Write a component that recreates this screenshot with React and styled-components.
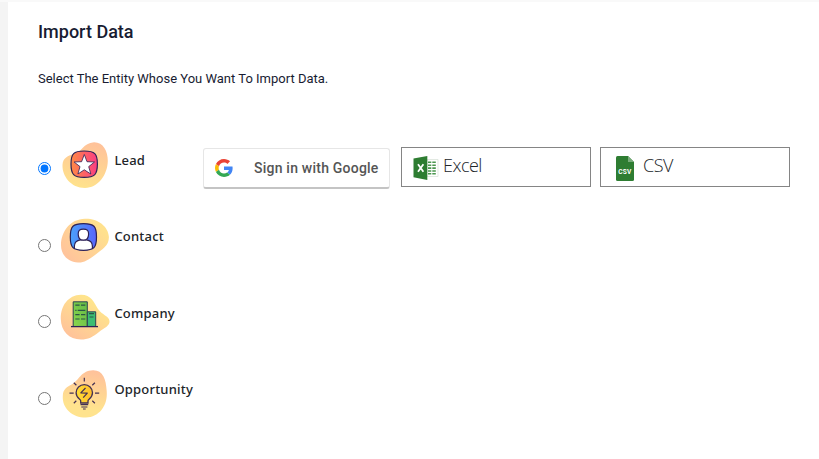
import React, { useState } from 'react';
import styled, { createGlobalStyle } from 'styled-components';

const GlobalStyle = createGlobalStyle`
  * {
    box-sizing: border-box;
  }

  body {
    margin: 0;
    background-color: #f4f4f4;
    overflow: hidden;
  }
`;

const Page = styled.div`
  height: 100vh;
  padding: 2px 0 0 8px;
  background: linear-gradient(#f9f9f9 2px, #f4f4f4 2px);
`;

const Panel = styled.main`
  height: 100%;
  padding: 18px 29px 0 30px;
  background-color: #fff;
  color: #181c32;
  font-family: Roboto, sans-serif;
`;

const Title = styled.h1`
  margin: 0;
  font-size: 18px;
  line-height: 24px;
  font-weight: 500;
`;

const Description = styled.p`
  margin: 25px 0 0;
  font-size: 13px;
  line-height: 20px;
`;

const EntityList = styled.div`
  margin-top: 41px;
`;

const EntityRow = styled.div`
  height: 76.5px;
  display: grid;
  grid-template-columns: 22px 54px 89px 1fr;
  align-items: start;
`;

const Radio = styled.input`
  width: 13px;
  height: 13px;
  margin: 32px 0 0;
`;

const EntityIcon = styled.svg`
  display: block;
  width: 50px;
  height: 50px;
  margin-top: 9.6px;
`;

const EntityLabel = styled.label`
  margin-top: 19.6px;
  padding-left: 0.4px;
  font-family: 'Noto Sans', sans-serif;
  font-size: 13px;
  line-height: 20px;
  font-weight: 500;
  letter-spacing: 0.2px;
  color: #212529;
`;

const Sources = styled.div`
  display: flex;
  align-items: flex-start;
  padding-top: 17px;
`;

const GoogleButton = styled.button`
  width: 187px;
  height: 41px;
  margin: 1px 11px 0 0;
  padding: 0 0 0 11px;
  display: flex;
  align-items: center;
  gap: 21px;
  border: 1px solid #e6e6e6;
  border-bottom: 2px solid #c4c4c4;
  border-radius: 3px;
  background-color: #fff;
  color: #555;
  font-family: Roboto, sans-serif;
  font-size: 14px;
  font-weight: 500;
  letter-spacing: 0.22px;
  white-space: nowrap;
`;

const FileButton = styled.button`
  width: 190px;
  height: 40px;
  margin-right: 9px;
  padding: 0 0 4px ${({ $left }) => $left};
  display: flex;
  align-items: center;
  gap: ${({ $gap }) => $gap};
  border: 1px solid #858585;
  background-color: #fff;
  color: #212529;
  font-family: 'Open Sans', sans-serif;
  font-size: 18px;
  font-weight: 300;
  letter-spacing: ${({ $spacing }) => $spacing};

  svg {
    position: relative;
    top: 3px;
  }
`;

const LeadIcon = () => (
  <EntityIcon viewBox="0 0 50 50" fill="none">
    <defs>
      <linearGradient id="leadBlob" x1="35" y1="2" x2="24" y2="48" gradientUnits="userSpaceOnUse">
        <stop stopColor="#ffc19a" />
        <stop offset="1" stopColor="#ffe28c" />
      </linearGradient>
      <linearGradient id="leadTile">
        <stop stopColor="#ff8a45" />
        <stop offset="1" stopColor="#fb3c83" />
      </linearGradient>
    </defs>
    <path d="M2.5 25C3 18 7 16 14 14C22 12 23 3 34 2.2C43 2 48 11 47.8 21C47.5 35 38 47.8 25 48C11 48 2 36 2.5 25Z" fill="url(#leadBlob)" />
    <path d="M24.2 11C34.8 11 37.4 13.7 37.4 24S34.8 37.4 24.2 37.4S11 34.3 11 24S13.6 11 24.2 11Z" fill="url(#leadTile)" stroke="#2d2257" strokeWidth="1.2" />
    <path d="M24.3 14.5L27 21.7L34.5 22L28.7 26.6L30.8 34L24.3 29.8L17.9 34L20 26.6L14.1 22L21.6 21.7Z" fill="#fff" stroke="#2d2257" strokeWidth="0.8" strokeLinejoin="round" />
  </EntityIcon>
);

const ContactIcon = () => (
  <EntityIcon viewBox="0 0 50 50" fill="none">
    <defs>
      <linearGradient id="contactBlob" x1="5" y1="38" x2="38" y2="8" gradientUnits="userSpaceOnUse">
        <stop stopColor="#ffc49b" />
        <stop offset="1" stopColor="#ffe18d" />
      </linearGradient>
      <linearGradient id="contactTile">
        <stop stopColor="#4ba1fb" />
        <stop offset="1" stopColor="#5865fb" />
      </linearGradient>
      <clipPath id="contactClip">
        <path d="M23.5 7.6C34 7.6 36.5 10.3 36.5 21S34 34.3 23.5 34.3S10.3 31.7 10.3 21S13 7.6 23.5 7.6Z" />
      </clipPath>
    </defs>
    <path d="M1 29C1 16 10 3 25 2.8C37 2.3 48.5 10 48.9 21C49 30 42 33 35 39C28 44 24 46.8 18 46.5C8 46 1 39 1 29Z" fill="url(#contactBlob)" />
    <path d="M23.5 7.6C34 7.6 36.5 10.3 36.5 21S34 34.3 23.5 34.3S10.3 31.7 10.3 21S13 7.6 23.5 7.6Z" fill="url(#contactTile)" />
    <g clipPath="url(#contactClip)" fill="#fff" stroke="#2d2257" strokeWidth="1.2">
      <path d="M14.4 35V30C14.4 26.5 17 24.3 20.5 23.8H26.5C30 24.3 32.4 26.5 32.4 30V35Z" />
      <path d="M18.2 17.9C18.2 14.3 19.5 13.2 23.4 13.2S28.6 14.3 28.6 17.9C28.6 21.9 26.9 24.2 23.4 24.2S18.2 21.9 18.2 17.9Z" />
    </g>
    <path d="M23.5 7.6C34 7.6 36.5 10.3 36.5 21S34 34.3 23.5 34.3S10.3 31.7 10.3 21S13 7.6 23.5 7.6Z" stroke="#2d2257" strokeWidth="1.2" />
  </EntityIcon>
);

const CompanyIcon = () => (
  <EntityIcon viewBox="0 0 50 50" fill="none">
    <defs>
      <linearGradient id="companyBlob" x1="8" y1="43" x2="31" y2="8" gradientUnits="userSpaceOnUse">
        <stop stopColor="#ffc29a" />
        <stop offset="1" stopColor="#ffe48c" />
      </linearGradient>
      <linearGradient id="companyTower" x1="0" y1="1" x2="1" y2="0">
        <stop stopColor="#8bd84c" />
        <stop offset="1" stopColor="#63b947" />
      </linearGradient>
    </defs>
    <path d="M.8 26C.5 13 8 2 21 1.7C31 1.6 34 9 38 16C42 22 49 23 49.5 28C50 33 44 35 39 39C33 44 28 46.5 21 46.5C9 46.5 1 38 .8 26Z" fill="url(#companyBlob)" />
    <path d="M13.2 8.8H27.3V33.5H13.2Z" fill="url(#companyTower)" stroke="#2e4353" strokeWidth="1" />
    <path d="M27.3 18.8H35.7V33.5H27.3Z" fill="#3cbd72" stroke="#2e4353" strokeWidth="1" />
    <path d="M15.3 12.2H19.6M21 12.2H25.3M15.3 17.4H16.5M17.7 17.4H25.3M15.3 21.6H19.6M21 21.6H25.3M15.3 26H19.6M21 26H25.3M29 20.6H34M29.5 24H33.5" stroke="#2b5646" strokeWidth="1.2" />
    <path d="M11 33.6H38" stroke="#2d2257" strokeWidth="1.3" />
  </EntityIcon>
);

const OpportunityIcon = () => (
  <EntityIcon viewBox="0 0 50 50" fill="none">
    <defs>
      <linearGradient id="opportunityBlob" x1="32" y1="1" x2="24" y2="38" gradientUnits="userSpaceOnUse">
        <stop stopColor="#ffc19b" />
        <stop offset="1" stopColor="#ffe38e" />
      </linearGradient>
      <linearGradient id="opportunityBulb">
        <stop stopColor="#ffdd34" />
        <stop offset="1" stopColor="#ffbd2e" />
      </linearGradient>
    </defs>
    <path d="M2.8 27C3 20 7 18 12 15.3C19 11.3 21 1.6 33 1.2C43 1 46 10 46.7 22C48 37 39 48 26 48.6C12 48.6 2 39 2.8 27Z" fill="url(#opportunityBlob)" />
    <path d="M20.7 34V31.7C20.7 30 16.1 29.2 16.1 23.8C16.1 19.2 19.8 15.7 24.3 15.7S32.5 19.2 32.5 23.8C32.5 29.2 28 30 28 31.7V34Z" fill="url(#opportunityBulb)" stroke="#443052" strokeWidth="1.3" />
    <path d="M25.5 19L20.8 23.8L27.3 24.1L23.2 28.7" stroke="#443052" strokeWidth="1.2" strokeLinejoin="round" />
    <path d="M20.5 35.6H28.2M21.3 38H27.4M23 40H25.7M24.3 8.8V12.5M9.5 24.2H13.7M35 24.2H39.2M13.8 13.7L16.4 16.2M34.9 13.7L32.3 16.2M13.8 34.2L16.3 31.8M34.9 34.2L32.3 31.8" stroke="#443052" strokeWidth="1.2" />
  </EntityIcon>
);

const GoogleLogo = () => (
  <svg width="18" height="18" viewBox="0 0 48 48">
    <path fill="#EA4335" d="M24 9.5c3.54 0 6.71 1.22 9.21 3.6l6.85-6.85C35.9 2.38 30.47 0 24 0 14.62 0 6.51 5.38 2.56 13.22l7.98 6.19C12.43 13.72 17.74 9.5 24 9.5z" />
    <path fill="#4285F4" d="M46.98 24.55c0-1.57-.15-3.09-.38-4.55H24v9.02h12.94c-.58 2.96-2.26 5.48-4.78 7.18l7.73 6c4.51-4.18 7.09-10.36 7.09-17.65z" />
    <path fill="#FBBC05" d="M10.53 28.59c-.48-1.45-.76-2.99-.76-4.59s.27-3.14.76-4.59l-7.98-6.19C.92 16.46 0 20.12 0 24c0 3.88.92 7.54 2.56 10.78l7.97-6.19z" />
    <path fill="#34A853" d="M24 48c6.48 0 11.93-2.13 15.89-5.81l-7.73-6c-2.15 1.45-4.92 2.3-8.16 2.3-6.26 0-11.57-4.22-13.47-9.91l-7.98 6.19C6.51 42.62 14.62 48 24 48z" />
  </svg>
);

const ExcelLogo = () => (
  <svg width="26" height="24" viewBox="0 0 26 24" fill="none">
    <path d="M14 3.5H25V20.5H14Z" fill="#fff" stroke="#d6dfd6" strokeWidth=".7" />
    <path d="M15 6.3H18.3M19.3 6.3H22.8M15 9.2H18.3M19.3 9.2H22.8M15 12.1H18.3M19.3 12.1H22.8M15 15H18.3M19.3 15H22.8M15 17.8H18.3M19.3 17.8H22.8" stroke="#4a964e" strokeWidth="1.6" />
    <path d="M.5 2.6L14.3 0V24L.5 21.3Z" fill="#2e7d32" />
    <path d="M5 8.3L10.4 15.8M10.4 8.3L5 15.8" stroke="#fff" strokeWidth="1.8" />
  </svg>
);

const CsvLogo = () => (
  <svg width="18" height="25" viewBox="0 0 18 25">
    <path d="M1.5 0H12L18 6V23.5Q18 25 16.5 25H1.5Q0 25 0 23.5V1.5Q0 0 1.5 0Z" fill="#2e7d32" />
    <path d="M12 0V6H18Z" fill="#77ab79" />
    <text x="8.9" y="18.2" textAnchor="middle" fill="#fff" fontFamily="Roboto, sans-serif" fontSize="6.6" fontWeight="700" letterSpacing=".2">CSV</text>
  </svg>
);

const entities = [
  { name: 'Lead', Icon: LeadIcon },
  { name: 'Contact', Icon: ContactIcon },
  { name: 'Company', Icon: CompanyIcon },
  { name: 'Opportunity', Icon: OpportunityIcon },
];

const ImportSources = () => (
  <Sources>
    <GoogleButton>
      <GoogleLogo />
      Sign in with Google
    </GoogleButton>
    <FileButton $left="11px" $gap="4px" $spacing="-0.5px">
      <ExcelLogo />
      Excel
    </FileButton>
    <FileButton $left="15px" $gap="9px" $spacing="-0.5px">
      <CsvLogo />
      CSV
    </FileButton>
  </Sources>
);

const App = () => {
  const [selected, setSelected] = useState('Lead');

  return (
    <>
      <GlobalStyle />
      <Page>
        <Panel>
          <Title>Import Data</Title>
          <Description>Select The Entity Whose You Want To Import Data.</Description>
          <EntityList>
            {entities.map(({ name, Icon }) => (
              <EntityRow key={name}>
                <Radio
                  type="radio"
                  name="entity"
                  id={name}
                  checked={selected === name}
                  onChange={() => setSelected(name)}
                />
                <Icon />
                <EntityLabel htmlFor={name}>{name}</EntityLabel>
                {selected === name && <ImportSources />}
              </EntityRow>
            ))}
          </EntityList>
        </Panel>
      </Page>
    </>
  );
};

export default App;
